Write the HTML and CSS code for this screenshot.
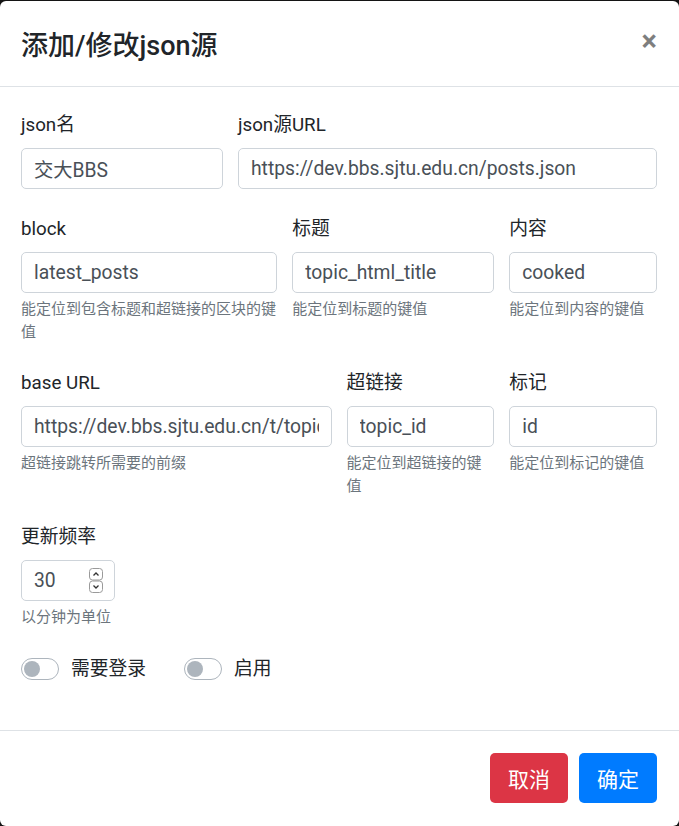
FILE: index.html
```html
<!DOCTYPE html>
<html lang="zh">
<head>
<meta charset="utf-8">
<title>添加/修改json源</title>
<link rel="stylesheet" href="styles.css">
</head>
<body>
<div class="modal">
  <div class="modal-header">
    <h4 class="modal-title">添加/修改json源</h4>
    <button class="close" type="button">×</button>
  </div>
  <div class="modal-body">
    <div class="row">
      <div class="field col-4">
        <label class="label">json名</label>
        <input class="input" type="text" value="交大BBS">
      </div>
      <div class="field col-8">
        <label class="label">json源URL</label>
        <input class="input" type="text" value="https://dev.bbs.sjtu.edu.cn/posts.json">
      </div>
    </div>
    <div class="row">
      <div class="field col-5">
        <label class="label">block</label>
        <input class="input" type="text" value="latest_posts">
        <small class="help">能定位到包含标题和超链接的区块的键值</small>
      </div>
      <div class="field col-4">
        <label class="label">标题</label>
        <input class="input" type="text" value="topic_html_title">
        <small class="help">能定位到标题的键值</small>
      </div>
      <div class="field col-3">
        <label class="label">内容</label>
        <input class="input" type="text" value="cooked">
        <small class="help">能定位到内容的键值</small>
      </div>
    </div>
    <div class="row">
      <div class="field col-6">
        <label class="label">base URL</label>
        <input class="input" type="text" value="https://dev.bbs.sjtu.edu.cn/t/topic/">
        <small class="help">超链接跳转所需要的前缀</small>
      </div>
      <div class="field col-3">
        <label class="label">超链接</label>
        <input class="input" type="text" value="topic_id">
        <small class="help">能定位到超链接的键值</small>
      </div>
      <div class="field col-3">
        <label class="label">标记</label>
        <input class="input" type="text" value="id">
        <small class="help">能定位到标记的键值</small>
      </div>
    </div>
    <div class="row">
      <div class="field col-2">
        <label class="label">更新频率</label>
        <div class="input number">
          <span class="num-value">30</span>
          <svg class="spinner" width="14" height="26" viewBox="0 0 14 26">
            <rect x="0.5" y="0.5" width="13" height="11.5" rx="3" fill="#fff" stroke="#9a9a9a"/>
            <rect x="0.5" y="13" width="13" height="11.5" rx="3" fill="#fff" stroke="#9a9a9a"/>
            <path d="M4.5 7.5 L7 5 L9.5 7.5" fill="none" stroke="#333" stroke-width="1.3"/>
            <path d="M4.5 17.5 L7 20 L9.5 17.5" fill="none" stroke="#333" stroke-width="1.3"/>
          </svg>
        </div>
        <small class="help">以分钟为单位</small>
      </div>
    </div>
    <div class="switches">
      <div class="switch">
        <span class="track"><span class="knob"></span></span>
        <span class="switch-label">需要登录</span>
      </div>
      <div class="switch">
        <span class="track"><span class="knob"></span></span>
        <span class="switch-label">启用</span>
      </div>
    </div>
  </div>
  <div class="modal-footer">
    <button class="btn btn-danger" type="button">取消</button>
    <button class="btn btn-primary" type="button">确定</button>
  </div>
</div>
</body>
</html>
```

FILE: styles.css
```css
html, body {
  margin: 0;
  padding: 0;
  background: #141414;
}
body {
  font-family: Roboto, "Noto Sans CJK SC", sans-serif;
  color: #212529;
  padding-top: 1px;
  overflow: hidden;
}
.modal {
  width: 679px;
  height: 825px;
  background: #fff;
  border-radius: 6px;
  overflow: hidden;
  display: flex;
  flex-direction: column;
}
.modal-header {
  display: flex;
  justify-content: space-between;
  align-items: flex-start;
  padding: 27px 22px 22px 21px;
  border-bottom: 1px solid #dee2e6;
}
.modal-title {
  margin: 0;
  font-size: 27px;
  line-height: 36px;
  font-weight: 500;
  color: #212529;
}
.close {
  border: 0;
  background: transparent;
  padding: 0;
  margin: -3px 0 0 0;
  font-family: Roboto, "Noto Sans CJK SC", sans-serif;
  font-size: 29px;
  line-height: 32px;
  font-weight: 700;
  color: #000;
  opacity: 0.5;
}
.modal-body {
  flex: 1;
  padding: 24px 22px 0 21px;
}
.row {
  display: grid;
  grid-template-columns: repeat(12, 1fr);
  column-gap: 15px;
  margin-bottom: 26px;
}
.col-2 { grid-column: span 2; }
.col-3 { grid-column: span 3; }
.col-4 { grid-column: span 4; }
.col-5 { grid-column: span 5; }
.col-6 { grid-column: span 6; }
.col-8 { grid-column: span 8; }
.field {
  display: flex;
  flex-direction: column;
  min-width: 0;
}
.label {
  font-size: 18.75px;
  line-height: 28px;
  margin-bottom: 9px;
  color: #212529;
}
.input {
  box-sizing: border-box;
  width: 100%;
  height: 41px;
  border: 1px solid #ced4da;
  border-radius: 5px;
  padding: 0 12px;
  font-family: Roboto, "Noto Sans CJK SC", sans-serif;
  font-size: 19.3px;
  color: #495057;
  background: #fff;
  outline: none;
}
.number {
  display: flex;
  align-items: center;
  justify-content: space-between;
  padding-right: 11px;
}
.spinner {
  display: block;
}
.help {
  margin-top: 5px;
  font-size: 15px;
  line-height: 22.5px;
  color: #6c757d;
}
.switches {
  display: flex;
  align-items: center;
  gap: 38px;
  margin-top: 1px;
}
.switch {
  display: flex;
  align-items: center;
  gap: 12px;
}
.track {
  box-sizing: border-box;
  width: 38px;
  height: 22px;
  border: 1px solid #adb5bd;
  border-radius: 11px;
  background: #fff;
  position: relative;
}
.knob {
  position: absolute;
  left: 2px;
  top: 2px;
  width: 16px;
  height: 16px;
  border-radius: 50%;
  background: #adb5bd;
}
.switch-label {
  font-size: 18.75px;
  line-height: 28px;
  color: #212529;
}
.modal-footer {
  display: flex;
  justify-content: flex-end;
  gap: 11px;
  padding: 22px 22px 23px 21px;
  border-top: 1px solid #dee2e6;
}
.btn {
  border: 0;
  border-radius: 5px;
  height: 50px;
  padding: 0 18px;
  font-family: Roboto, "Noto Sans CJK SC", sans-serif;
  font-size: 21px;
  color: #fff;
}
.btn-danger { background: #dc3545; }
.btn-primary { background: #007bff; }
```
